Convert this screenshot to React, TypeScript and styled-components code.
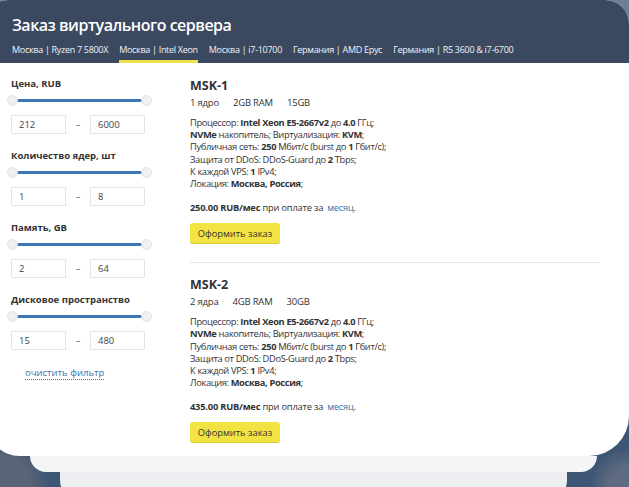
import React from "react";
import styled, { createGlobalStyle } from "styled-components";

const Global = createGlobalStyle`
  html, body { margin: 0; padding: 0; }
  body {
    width: 629px;
    height: 487px;
    overflow: hidden;
    font-family: "Open Sans", "Noto Sans", sans-serif;
    color: #333;
    background:
      radial-gradient(circle at 0% 0%, #6f7e93 0 6px, transparent 10px),
      radial-gradient(circle at 100% 0%, #6f7e93 0 40px, transparent 60px),
      radial-gradient(circle at 0% 100%, #5b6477 0 30px, transparent 50px),
      radial-gradient(circle at 100% 100%, #5e6b80 0 20px, transparent 40px),
      #3d5674;
  }
`;

const Scene = styled.div`
  margin-left: -14px;
  width: 643px;
  display: flex;
  flex-direction: column;
`;

const Card = styled.div`
  background: #fff;
  border-radius: 22px 24px 40px 34px;
  overflow: hidden;
  height: 456px;
  display: flex;
  flex-direction: column;
`;

const StackLayer = styled.div<{ $left: number; $right: number; $h: number; $bg: string }>`
  margin: 0 ${(p) => 629 - p.$right}px 0 ${(p) => p.$left + 14}px;
  height: ${(p) => p.$h}px;
  background: ${(p) => p.$bg};
  border-radius: 0 0 22px 22px;
`;

const Header = styled.header`
  background: #3b4960;
  padding: 13px 0 0 26px;
  height: 50px;
  display: flex;
  flex-direction: column;
`;

const Title = styled.h1`
  margin: 0;
  font-size: 16px;
  line-height: 24px;
  font-weight: 600;
  color: #fff;
  letter-spacing: -0.5px;
`;

const Tabs = styled.nav`
  display: flex;
  gap: 11px;
  margin-top: 3px;
`;

const Tab = styled.div<{ $active?: boolean }>`
  font-size: 9px;
  line-height: 20px;
  color: #f0f3f6;
  white-space: nowrap;
  border-bottom: 3px solid ${(p) => (p.$active ? "#f2e04a" : "transparent")};
  letter-spacing: -0.3px;
`;

const Body = styled.div`
  display: flex;
  padding: 14px 0 0 24px;
  gap: 39px;
`;

const Sidebar = styled.aside`
  width: 141px;
  display: flex;
  flex-direction: column;
`;

const Filter = styled.div`
  display: flex;
  flex-direction: column;
  margin-bottom: 15px;
`;

const FilterLabel = styled.div`
  font-size: 9.5px;
  font-weight: 700;
  line-height: 14px;
  color: #333;
  padding-left: 1px;
  margin-bottom: 4px;
`;

const Slider = styled.div`
  display: flex;
  align-items: center;
  height: 10px;
  margin: 0 -1px 10px -3px;
`;

const Thumb = styled.span`
  width: 9px;
  height: 9px;
  border-radius: 50%;
  background: #f0f0f0;
  border: 1px solid #e3e3e3;
  flex: none;
  position: relative;
  z-index: 1;
`;

const Track = styled.span`
  flex: 1;
  height: 3px;
  background: #3f77b5;
  margin: 0 -1px;
`;

const Range = styled.div`
  display: flex;
  align-items: center;
  padding-left: 1px;
`;

const Field = styled.div`
  width: 46px;
  height: 17px;
  border: 1px solid #e3e3e3;
  font-size: 9.5px;
  line-height: 17px;
  padding-left: 7px;
  color: #444;
  box-sizing: content-box;
  flex: none;
`;

const Dash = styled.span`
  width: 24px;
  text-align: center;
  font-size: 9px;
  color: #666;
`;

const ClearLink = styled.a`
  margin: 2px 0 0 15px;
  font-size: 9.5px;
  color: #3e6fa8;
  text-decoration: none;
  border-bottom: 1px dotted #3e6fa8;
  align-self: flex-start;
  line-height: 12px;
`;

const Offers = styled.main`
  width: 410px;
  display: flex;
  flex-direction: column;
`;

const Offer = styled.section<{ $first?: boolean }>`
  padding: ${(p) => (p.$first ? "0" : "13px")} 0 19px;
  border-bottom: ${(p) => (p.$first ? "1px solid #e6e6e6" : "none")};
`;

const OfferName = styled.h2`
  margin: 0;
  font-size: 12.5px;
  line-height: 18px;
  font-weight: 700;
  color: #333;
`;

const Specs = styled.div`
  display: flex;
  gap: 14px;
  font-size: 9.5px;
  line-height: 14px;
  margin-top: 1px;
  color: #333;
  letter-spacing: -0.2px;
`;

const Desc = styled.p`
  margin: 7px 0 0;
  font-size: 9.3px;
  line-height: 12.2px;
  color: #333;
  letter-spacing: -0.35px;
  b { font-weight: 700; }
`;

const Price = styled.div`
  margin-top: 11px;
  font-size: 9.3px;
  line-height: 14px;
  letter-spacing: -0.2px;
  b { font-weight: 700; }
`;

const PeriodLink = styled.a`
  color: #3e6fa8;
  margin-left: 4px;
  text-decoration: none;
`;

const OrderButton = styled.button`
  margin-top: 8px;
  width: 90px;
  height: 20px;
  border: none;
  border-radius: 3px;
  background: #f3e342;
  box-shadow: 0 1px 0 #d9c93a;
  font-family: inherit;
  font-size: 9.3px;
  color: #333;
  padding: 0;
  display: block;
`;

const filters = [
  { label: "Цена, RUB", min: "212", max: "6000" },
  { label: "Количество ядер, шт", min: "1", max: "8" },
  { label: "Память, GB", min: "2", max: "64" },
  { label: "Дисковое пространство", min: "15", max: "480" },
];

const offers = [
  { name: "MSK-1", cores: "1 ядро", ram: "2GB RAM", disk: "15GB", price: "250.00" },
  { name: "MSK-2", cores: "2 ядра", ram: "4GB RAM", disk: "30GB", price: "435.00" },
];

const tabs = [
  "Москва | Ryzen 7 5800X",
  "Москва | Intel Xeon",
  "Москва | i7-10700",
  "Германия | AMD Epyc",
  "Германия | R5 3600 & i7-6700",
];

export default function App() {
  return (
    <>
      <Global />
      <Scene>
        <Card>
          <Header>
            <Title>Заказ виртуального сервера</Title>
            <Tabs>
              {tabs.map((t, i) => (
                <Tab key={t} $active={i === 1}>
                  {t}
                </Tab>
              ))}
            </Tabs>
          </Header>
          <Body>
            <Sidebar>
              {filters.map((f) => (
                <Filter key={f.label}>
                  <FilterLabel>{f.label}</FilterLabel>
                  <Slider>
                    <Thumb />
                    <Track />
                    <Thumb />
                  </Slider>
                  <Range>
                    <Field>{f.min}</Field>
                    <Dash>–</Dash>
                    <Field>{f.max}</Field>
                  </Range>
                </Filter>
              ))}
              <ClearLink>очистить фильтр</ClearLink>
            </Sidebar>
            <Offers>
              {offers.map((o, i) => (
                <Offer key={o.name} $first={i === 0}>
                  <OfferName>{o.name}</OfferName>
                  <Specs>
                    <span>{o.cores}</span>
                    <span>{o.ram}</span>
                    <span>{o.disk}</span>
                  </Specs>
                  <Desc>
                    Процессор: <b>Intel Xeon E5-2667v2</b> до <b>4.0</b> ГГц;
                    <br />
                    <b>NVMe</b> накопитель; Виртуализация: <b>KVM</b>;
                    <br />
                    Публичная сеть: <b>250</b> Мбит/с (burst до <b>1</b> Гбит/с);
                    <br />
                    Защита от DDoS: DDoS-Guard до <b>2</b> Tbps;
                    <br />
                    К каждой VPS: <b>1</b> IPv4;
                    <br />
                    Локация: <b>Москва, Россия</b>;
                  </Desc>
                  <Price>
                    <b>{o.price} RUB/мес</b> при оплате за
                    <PeriodLink>месяц</PeriodLink>.
                  </Price>
                  <OrderButton>Оформить заказ</OrderButton>
                </Offer>
              ))}
            </Offers>
          </Body>
        </Card>
        <StackLayer $left={30} $right={597} $h={16} $bg="#f4f5f7" />
        <StackLayer $left={60} $right={567} $h={30} $bg="#eceef1" />
      </Scene>
    </>
  );
}
